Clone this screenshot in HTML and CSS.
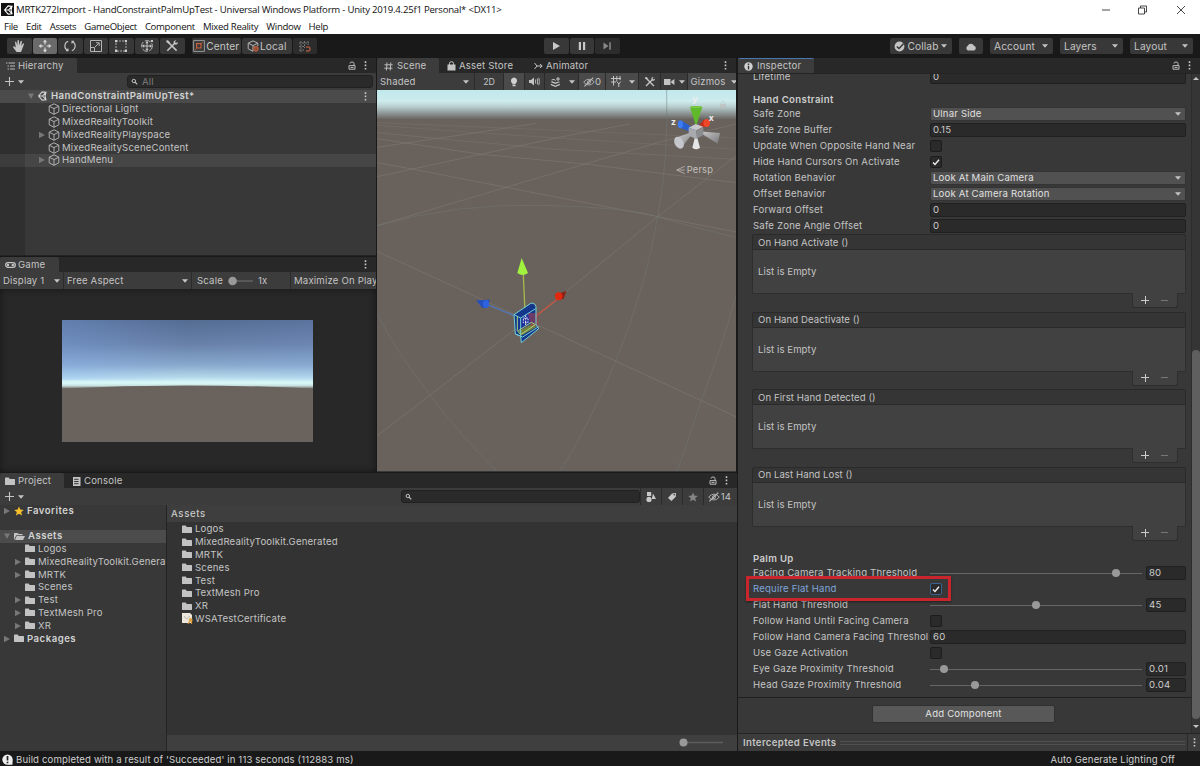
FILE: index.html
```
<!DOCTYPE html>
<html lang="en">
<head>
    <meta charset="UTF-8">
    <meta name="viewport" content="width=device-width, initial-scale=1.0">
    <title>MRTK272Import - HandConstraintPalmUpTest</title>
    <link rel="stylesheet" href="styles.css">
</head>
<body>

    <!-- Shared icons -->
    <svg class="sprite">
        <symbol id="i-cube" viewBox="0 0 12 12"><path d="M6 .8 10.8 3.2V8.8L6 11.3 1.2 8.8V3.2ZM1.2 3.2 6 5.6 10.8 3.2M6 5.6V11.3" fill="none" stroke="#b4b4b4" stroke-width=".95" stroke-linejoin="round"/></symbol>
        <symbol id="i-folder" viewBox="0 0 10 9"><path d="M0 1.2Q0 .6.6.6H3.6L4.8 2H9.4Q10 2 10 2.6V7.4Q10 8 9.4 8H.6Q0 8 0 7.4Z" fill="#c2c2c2"/></symbol>
        <symbol id="i-right" viewBox="0 0 6 8"><path d="M0 .8 6 4 0 7.2Z" fill="#777"/></symbol>
        <symbol id="i-open" viewBox="0 0 6 8"><path d="M0 1.5H6L3 7Z" fill="#777"/></symbol>
        <symbol id="i-drop" viewBox="0 0 6 4"><path d="M0 .3H6L3 3.7Z" fill="#c4c4c4"/></symbol>
        <symbol id="i-lock" viewBox="0 0 8 9"><path d="M1 4.6H7V8.2H1ZM2 2.6V2.4Q2 1 4 1T6 2.4V4.6" fill="none" stroke="#bdbdbd" stroke-width="1"/><path d="M2.5 6.4H5.5" stroke="#bdbdbd"/></symbol>
        <symbol id="i-more" viewBox="0 0 3 9"><path d="M.7.3H2.3V1.9H.7ZM.7 3.6H2.3V5.2H.7ZM.7 6.9H2.3V8.5H.7Z" fill="#c8c8c8"/></symbol>
        <symbol id="i-plus" viewBox="0 0 9 9"><path d="M4.5 0V9M0 4.5H9" stroke="#c4c4c4" stroke-width="1.1"/></symbol>
        <symbol id="i-search" viewBox="0 0 8 8"><circle cx="2.8" cy="3" r="1.7" fill="none" stroke="#c4c4c4"/><path d="M4.1 4.2 6.2 6.4" stroke="#c4c4c4" stroke-width="1.2"/></symbol>
        <symbol id="i-check" viewBox="0 0 10 10"><path d="M2 5.4 4 7.5 8 2.7" fill="none" stroke="#eee" stroke-width="1.4"/></symbol>
        <symbol id="i-unity" viewBox="0 0 10 10"><path d="M9 1.2 5.2.9 1.6 5 5.2 9.1 9 8.8 8 5ZM1.6 5H5.6M5.6 5 8.6 1.5M5.6 5 8.6 8.5" fill="none" stroke="currentColor" stroke-width="1.1"/></symbol>
        <symbol id="i-eye" viewBox="0 0 11 9"><path d="M.6 4.6Q5.5-.8 10.4 4.6 5.5 10 .6 4.6Z" fill="none" stroke="#aaa" stroke-width=".9"/><circle cx="5.5" cy="4.6" r="1.4" fill="none" stroke="#aaa" stroke-width=".9"/><path d="M1.3 8.5 9.4.5" stroke="#bbb" stroke-width="1.1"/></symbol>
        <symbol id="i-star" viewBox="0 0 10 10"><path d="M5 .4 6.3 3.6 9.8 3.9 7.2 6.1 8 9.6 5 7.7 2 9.6 2.8 6.1.2 3.9 3.7 3.6Z" fill="currentColor"/></symbol>
        <symbol id="i-tools" viewBox="0 0 14 14"><path d="M4 4 11.6 11.6M2.3 11.7 10 4" stroke="#c4c4c4" stroke-width="1.6"/><path d="M1.2 1.5 3 1.2 5.2 3.6 3.8 5 1.3 3Z" fill="#c4c4c4"/><path d="M11.2 1.3 9.9 2.9 11.1 4.1 12.8 2.9Q13.1 5.6 10.4 5.7L8.4 3.8Q8.5 1 11.2 1.3Z" fill="#c4c4c4"/></symbol>
    </svg>

    <header class="titlebar">
        <div class="title-row">
            <span class="logo"><svg width="10" height="10"><use href="#i-unity"/></svg></span>
            <span class="title-text">MRTK272Import - HandConstraintPalmUpTest - Universal Windows Platform - Unity 2019.4.25f1 Personal* &lt;DX11&gt;</span>
            <svg class="win-buttons" width="88" height="12" viewBox="0 0 88 12"><path d="M1 6H9M37.5 4H43.5V10H37.5ZM39.5 4V2H45.5V8H43.5M76 2 84 10M84 2 76 10" fill="none" stroke="#333" stroke-width=".9"/></svg>
        </div>
        <nav class="menu">
            <span>File</span><span>Edit</span><span>Assets</span><span>GameObject</span><span>Component</span><span>Mixed Reality</span><span>Window</span><span>Help</span>
        </nav>
    </header>

    <div class="toolbar">
        <div class="group tools">
            <span class="tb"><svg width="14" height="14" viewBox="0 0 14 14"><path d="M4.6 13 1.2 8.4Q1 7 2.2 7.2L3.8 8.6 3 3Q3.6 2 4.3 3L5.3 6.4 5.5 1.6Q6.3.6 7 1.6L7.2 6.3 8.6 2.2Q9.5 1.4 10 2.5L9.2 7 11 4.4Q12.1 4.1 12 5.2L10.2 10 9 13Z" fill="#c4c4c4"/></svg></span>
            <span class="tb on"><svg width="14" height="14" viewBox="0 0 14 14"><path d="M7 3V5.5M7 8.5V11M3 7H5.5M8.5 7H11" stroke="#ddd" stroke-width="1.1"/><path d="M7 .6 9 3.3H5ZM7 13.4 9 10.7H5ZM.6 7 3.3 5V9ZM13.4 7 10.7 5V9Z" fill="#ddd"/></svg></span>
            <span class="tb"><svg width="14" height="14" viewBox="0 0 14 14"><path d="M4.6 11.5A5 5 0 0 1 5.2 2.3M9.4 2.5A5 5 0 0 1 8.8 11.7M3 11.8H5V9.6M11 2.2H9V4.4" fill="none" stroke="#c4c4c4" stroke-width="1.1"/></svg></span>
            <span class="tb"><svg width="14" height="14" viewBox="0 0 14 14"><path d="M1.5 1.5H12.5V12.5H1.5ZM1.5 8.5H5.5V12.5M6 8 10 4M7 3.8H10.2V7" fill="none" stroke="#b4b4b4"/></svg></span>
            <span class="tb"><svg width="14" height="14" viewBox="0 0 14 14"><path d="M2 2H12V12H2Z" fill="none" stroke="#aaa" stroke-dasharray="2 1"/><path d="M1 1H3.2V3.2H1ZM10.8 1H13V3.2H10.8ZM1 10.8H3.2V13H1ZM10.8 10.8H13V13H10.8Z" fill="#ccc"/></svg></span>
            <span class="tb"><svg width="14" height="14" viewBox="0 0 14 14"><circle cx="7" cy="7" r="5.4" fill="none" stroke="#b4b4b4" stroke-dasharray="6 1.5"/><path d="M7 3V11M3 7H11" stroke="#c4c4c4"/><path d="M7 1.8 8.7 4.2H5.3ZM7 12.2 8.7 9.8H5.3ZM1.8 7 4.2 5.3V8.7ZM12.2 7 9.8 5.3V8.7ZM10.8 1H13V3H10.8Z" fill="#c4c4c4"/></svg></span>
            <span class="tb"><svg width="14" height="14"><use href="#i-tools"/></svg></span>
        </div>
        <div class="group pivot">
            <span class="tb wide"><svg width="12" height="12" viewBox="0 0 12 12"><path d="M.6.6H11.4V11.4H.6Z" fill="none" stroke="#999"/><path d="M3.6 3.6H8V8H3.6Z" fill="none" stroke="#c6603d" stroke-width="1.2"/><path d="M8 4 9.7 2.3M3.5 8.5 2.2 9.8" stroke="#c6603d"/></svg>Center</span>
            <span class="tb wide"><svg width="12" height="12" viewBox="0 0 12 12"><path d="M6 .8 10.8 3.2V6M6 11.3 1.2 8.8V3.2L6 .8M1.2 3.2 6 5.6 10.8 3.2M6 5.6V11.3" fill="none" stroke="#b4b4b4"/><circle cx="8.8" cy="8.8" r="2.2" fill="#3a3a3a" stroke="#c6603d" stroke-width="1.2"/><path d="M8.8 6.2V11.4M6.2 8.8H11.4" stroke="#c6603d" stroke-width=".7"/></svg>Local</span>
            <span class="tb dim"><svg width="13" height="13" viewBox="0 0 13 13"><path d="M1 3H11M1 6.5H7M1 10H6M3 1V12M6.5 1V8M10 1V5" fill="none" stroke="#777" stroke-dasharray="2 1"/><path d="M8 7H10Q12 7 12 9T10 11H8" fill="none" stroke="#a2553c" stroke-width="1.4"/></svg></span>
        </div>
        <div class="group play">
            <span class="tb"><svg width="10" height="10" viewBox="0 0 10 10"><path d="M2 1 9 5 2 9Z" fill="#c8c8c8"/></svg></span>
            <span class="tb"><svg width="10" height="10" viewBox="0 0 10 10"><path d="M1.8 1H4V9H1.8ZM6 1H8.2V9H6Z" fill="#c8c8c8"/></svg></span>
            <span class="tb dim"><svg width="10" height="10" viewBox="0 0 10 10"><path d="M1.5 1.5 6.5 5 1.5 8.5ZM7.3 1.2H8.8V8.8H7.3Z" fill="#888"/></svg></span>
        </div>
        <div class="services">
            <span class="tb collab"><svg width="11" height="11" viewBox="0 0 11 11"><circle cx="5.5" cy="5.5" r="4.9" fill="#c4c4c4"/><path d="M2.8 5.5 5 7.5 9.5 2.8" fill="none" stroke="#333" stroke-width="1.4"/></svg>Collab<svg width="6" height="4"><use href="#i-drop"/></svg></span>
            <span class="tb"><svg width="12" height="9" viewBox="0 0 12 9"><path d="M3 8.4A2.5 2.5 0 0 1 2.8 3.8 3.3 3.3 0 0 1 9 3.8 2.4 2.4 0 0 1 9.2 8.4Z" fill="#c4c4c4"/></svg></span>
            <span class="tb menu-btn">Account<svg width="6" height="4"><use href="#i-drop"/></svg></span>
            <span class="tb menu-btn">Layers<svg width="6" height="4"><use href="#i-drop"/></svg></span>
            <span class="tb menu-btn">Layout<svg width="6" height="4"><use href="#i-drop"/></svg></span>
        </div>
    </div>

    <main class="workspace">
        <div class="left">
            <div class="upper">
                <div class="left-col">
                    <section class="panel hierarchy">
                        <div class="tabs">
                            <span class="tab active hier-tab"><svg width="9" height="8" viewBox="0 0 9 8"><path d="M0 1H1.5M2.5 1H9M1.5 4H3M4 4H9M1.5 7H3M4 7H9" stroke="#bbb"/></svg>Hierarchy</span>
                            <span class="tab-tools"><svg width="8" height="9"><use href="#i-lock"/></svg><svg width="3" height="9"><use href="#i-more"/></svg></span>
                        </div>
                        <div class="subbar">
                            <svg class="add" width="9" height="9"><use href="#i-plus"/></svg><svg width="6" height="4"><use href="#i-drop"/></svg>
                            <span class="search hier-search"><svg width="8" height="8"><use href="#i-search"/></svg>All</span>
                        </div>
                        <div class="tree hier-tree">
                            <div class="row scene-row"><svg class="arrow" width="6" height="8"><use href="#i-open"/></svg><svg width="10" height="10"><use href="#i-unity"/></svg><b>HandConstraintPalmUpTest*</b><svg class="row-more" width="3" height="9"><use href="#i-more"/></svg></div>
                            <div class="row child"><i class="arrow"></i><svg width="12" height="12"><use href="#i-cube"/></svg>Directional Light</div>
                            <div class="row child"><i class="arrow"></i><svg width="12" height="12"><use href="#i-cube"/></svg>MixedRealityToolkit</div>
                            <div class="row child"><svg class="arrow" width="6" height="8"><use href="#i-right"/></svg><svg width="12" height="12"><use href="#i-cube"/></svg>MixedRealityPlayspace</div>
                            <div class="row child"><i class="arrow"></i><svg width="12" height="12"><use href="#i-cube"/></svg>MixedRealitySceneContent</div>
                            <div class="row child picked"><svg class="arrow" width="6" height="8"><use href="#i-right"/></svg><svg width="12" height="12"><use href="#i-cube"/></svg>HandMenu</div>
                        </div>
                    </section>

                    <section class="panel game">
                        <div class="tabs">
                            <span class="tab active game-tab"><svg width="11" height="6" viewBox="0 0 11 6"><rect x=".7" y=".7" width="9.6" height="4.6" rx="2.3" fill="none" stroke="#c4c4c4" stroke-width="1.3"/><circle cx="3" cy="3" r="1.2" fill="#c4c4c4"/><circle cx="7.8" cy="3" r="1.2" fill="#c4c4c4"/></svg>Game</span>
                            <span class="tab-tools"><svg width="3" height="9"><use href="#i-more"/></svg></span>
                        </div>
                        <div class="subbar game-bar">
                            <span class="display">Display 1<svg width="6" height="4"><use href="#i-drop"/></svg></span>
                            <span class="aspect">Free Aspect<svg width="6" height="4"><use href="#i-drop"/></svg></span>
                            <span class="scale">Scale<svg width="25" height="10" viewBox="0 0 25 10"><path d="M4 5H25" stroke="#626262" stroke-width="1.5"/><circle cx="4.6" cy="5" r="4.3" fill="#999"/></svg>1x</span>
                            <span class="maximize">Maximize On Play</span>
                        </div>
                        <div class="game-view">
                            <svg width="251" height="122" viewBox="0 0 251 122">
                                <defs>
                                    <linearGradient id="sky" x1="0" y1="0" x2="0" y2="1">
                                        <stop offset="0" stop-color="#546c92"/><stop offset=".35" stop-color="#6881a9"/><stop offset=".65" stop-color="#88a8cc"/><stop offset=".82" stop-color="#b2d6e8"/><stop offset=".91" stop-color="#dafaf9"/><stop offset=".95" stop-color="#c8e2e1"/><stop offset="1" stop-color="#68645f"/>
                                    </linearGradient>
                                    <linearGradient id="side" x1="0" y1="0" x2="1" y2="0">
                                        <stop offset="0" stop-color="#87b4ff" stop-opacity=".25"/><stop offset=".5" stop-color="#87b4ff" stop-opacity="0"/><stop offset="1" stop-color="#87b4ff" stop-opacity=".1"/>
                                    </linearGradient>
                                </defs>
                                <rect width="251" height="69" fill="url(#sky)"/>
                                <rect width="251" height="60" fill="url(#side)"/>
                                <path d="M0 68.5Q125 62.5 251 68.5V122H0Z" fill="#69625d"/>
                            </svg>
                        </div>
                    </section>
                </div>

                <section class="panel scene">
                    <div class="tabs">
                        <span class="tab active scene-tab"><svg width="9" height="9" viewBox="0 0 9 9"><path d="M3 .5 2.4 8.5M6.8.5 6.2 8.5M.5 2.8H8.7M.3 6.2H8.5" stroke="#bbb"/></svg>Scene</span>
                        <span class="tab store-tab"><svg width="9" height="10" viewBox="0 0 9 10"><path d="M.5 3.5H8.5V9.5H.5Z" fill="#c4c4c4"/><path d="M2.5 4V2.3Q2.5.7 4.5.7T6.5 2.3V4" fill="none" stroke="#c4c4c4"/></svg>Asset Store</span>
                        <span class="tab anim-tab"><svg width="9" height="8" viewBox="0 0 9 8"><path d="M.5 1 3 4 .5 7M3 4H8M6 2 8.2 4 6 6" fill="none" stroke="#c4c4c4"/></svg>Animator</span>
                        <span class="tab-tools"><svg width="3" height="9"><use href="#i-more"/></svg></span>
                    </div>
                    <div class="subbar scene-bar">
                        <span class="shaded">Shaded<svg width="6" height="4"><use href="#i-drop"/></svg></span>
                        <span class="cell two-d">2D</span>
                        <span class="cell lit c-light"><svg width="8" height="10" viewBox="0 0 8 10"><path d="M4 .5A3.2 3.2 0 0 1 5.6 6.4V7.2H2.4V6.4A3.2 3.2 0 0 1 4 .5ZM2.5 7.8H5.5V9.3H2.5Z" fill="#d0d0d0"/></svg></span>
                        <span class="cell c-audio"><svg width="11" height="9" viewBox="0 0 11 9"><path d="M0 3H2L5 .6V8.4L2 6H0Z" fill="#c4c4c4"/><path d="M6.6 2.5V6.5M8.3 1.6Q9 4.5 8.3 7.4M9.8.8Q11 4.5 9.8 8.2" fill="none" stroke="#c4c4c4" stroke-width=".9"/></svg></span>
                        <span class="cell c-fx"><svg width="11" height="10" viewBox="0 0 11 10"><path d="M.5 5 5.3 7 10.3 5 8.6 4.4 5.3 5.6 2.2 4.3Z" fill="#c4c4c4"/><path d="M.8 7.4 5.3 9.3 9.8 7.4" fill="none" stroke="#c4c4c4" stroke-width="1.2"/><path d="M1.5 3 4 2.4 5.6 3.6M8 0V4M6 2H10" fill="none" stroke="#c4c4c4"/></svg></span>
                        <span class="cell c-fxdrop"><svg width="6" height="4"><use href="#i-drop"/></svg></span>
                        <span class="cell lit c-eye"><svg width="12" height="10"><use href="#i-eye"/></svg>0</span>
                        <span class="cell lit c-grid"><svg width="11" height="11" viewBox="0 0 11 11"><path d="M0 2.5H10M0 6H5M2.5 0V9.5M5.8 0V5M9 0V4M5.8 5.5 7.8 8 9.8 5.5M7.8 8V11" fill="none" stroke="#c4c4c4"/></svg></span>
                        <span class="cell lit c-griddrop"><svg width="6" height="4"><use href="#i-drop"/></svg></span>
                        <span class="cell c-tools"><svg width="12" height="12"><use href="#i-tools"/></svg></span>
                        <span class="cell c-cam"><svg width="11" height="8" viewBox="0 0 11 8"><path d="M0 1H6.5V7H0ZM7.2 3.2 10.4 1V7L7.2 4.8Z" fill="#c4c4c4"/></svg><svg width="6" height="4"><use href="#i-drop"/></svg></span>
                        <span class="cell lit c-gizmos">Gizmos</span>
                        <span class="cell lit c-last"><svg width="6" height="4"><use href="#i-drop"/></svg></span>
                    </div>
                    <svg class="scene-view" width="359" height="381" viewBox="3 6 1077 1143">
                        <defs>
                            <linearGradient id="horizon" x1="0" y1="0" x2="0" y2="1">
                                <stop offset="0" stop-color="#c0e9ee"/><stop offset=".38" stop-color="#cdebec"/><stop offset=".55" stop-color="#b9cfd0"/><stop offset=".75" stop-color="#929d9c"/><stop offset="1" stop-color="#655e59"/>
                            </linearGradient>
                            <linearGradient id="grey-cone" x1="0" y1="0" x2="1" y2="1"><stop offset="0" stop-color="#d0d0d2"/><stop offset="1" stop-color="#77777a"/></linearGradient>
                        </defs>
                        <rect x="3" y="6" width="1077" height="1143" fill="#69615b"/>
                        <rect x="3" y="6" width="1077" height="90" fill="url(#horizon)"/>
                        <!-- ground grid -->
                        <g fill="none" stroke="#8a837e" stroke-width="2" opacity=".65">
                            <path d="M3 490 487 712 1080 986M3 1044 420 722M487 680 845 386 1080 204"/>
                            <path d="M3 224 118 245 390 298 845 386 1080 432"/>
                            <path d="M3 413 390 298 627 228 860 160 1080 108"/>
                            <path d="M3 266 314 199 540 150 760 108M3 178 300 134 480 106M3 152 315 199 627 228 1080 284"/>
                            <path d="M3 134 210 154 540 184 1080 214" opacity=".8"/>
                            <path d="M3 112 300 134 700 160 1080 184M3 104 480 124 1080 150" opacity=".6"/>
                        </g>
                        <g fill="none" stroke="#72797a" stroke-width="2" opacity=".75">
                            <path d="M3 413Q240 345 500 352T845 386 1080 448M872 6Q878 210 845 386 810 600 718 822 640 1010 553 1149M3 676Q60 790 160 918 260 1050 362 1149M1080 622Q1040 770 976 938 940 1050 903 1149"/>
                        </g>
                        <!-- move gizmo -->
                        <path d="M442 560 448 695" stroke="#a5b84c" stroke-width="4"/>
                        <path d="M437 510 456 555Q440 567 424 555Z" fill="#a0f23e"/>
                        <path d="M334 650 450 697" stroke="#5279bd" stroke-width="4"/>
                        <path d="M301 637 342 635 332 660 318 659Z" fill="#2450bd"/><ellipse cx="330" cy="648" rx="9" ry="12" fill="#2e63df"/>
                        <path d="M544 634 460 700" stroke="#c95843" stroke-width="4"/>
                        <path d="M571 609 536 620 544 637 563 632Z" fill="#8c2217"/><ellipse cx="548" cy="625" rx="11" ry="12" fill="#e2280f"/>
                        <path d="M414 680 468 646 479 654V708L488 722 436 764 434 744 418 738Z" fill="#14368c"/>
                        <path d="M430 692 464 670V718L430 738Z" fill="#1c2f9c"/>
                        <path d="M427 730 470 706 482 716 438 742Z" fill="#72813f"/>
                        <path d="M455 675H487V713L466 716Z" fill="#a43f52" opacity=".6"/>
                        <path d="M414 680 464 646Q477 643 480 656V710L488 722 436 764 434 744 418 738ZM414 680 434 690 479 662M434 690V744M418 738 440 747 488 716" fill="none" stroke="#72d0d2" stroke-width="3" stroke-linejoin="round"/>
                        <path d="M424 684V728L434 740 478 710 466 703 427 728" fill="none" stroke="#a5d579" stroke-width="3"/>
                        <path d="M442 690H456V704H442ZM449 682V711" fill="none" stroke="#eee" stroke-width="3" stroke-dasharray="5 3"/>
                        <!-- orientation gizmo -->
                        <path d="M960 125 917 98 907 118 940 130Z" fill="#2860cf"/><ellipse cx="913" cy="109" rx="8" ry="12" fill="#3d7cf0"/>
                        <path d="M960 125 983 95 1000 108 975 122Z" fill="#bd2d17"/><ellipse cx="992" cy="105" rx="10" ry="12" fill="#ef4528"/>
                        <path d="M955 130 903 148 915 181Z" fill="url(#grey-cone)"/><ellipse cx="909" cy="164" rx="13" ry="19" transform="rotate(-28 909 164)" fill="#c6c7cc"/>
                        <path d="M965 130 1032 135 1025 167Z" fill="url(#grey-cone)"/>
                        <path d="M960 135 972 179Q960 189 949 179Z" fill="#e6e6e6"/>
                        <path d="M960 115 942 57Q960 51 979 57Z" fill="#60b92b"/><path d="M941 57Q960 51 980 57 960 65 941 57Z" fill="#7bc944"/>
                        <path d="M938 119 959 108 982 116 961 127Z" fill="#c8c9cc"/><path d="M938 119 961 127V153L938 143Z" fill="#a9aaae"/><path d="M961 127 982 116V141L961 153Z" fill="#8c8d91"/>
                        <g class="axis-text"><text x="949" y="43">y</text><text x="885" y="110">z</text><text x="998" y="99">x</text></g>
                        <path d="M926 235 902 246 926 257M904 246H926" fill="none" stroke="#bdbab7" stroke-width="2.5"/>
                        <text class="persp" x="932" y="256">Persp</text>
                        <g opacity=".5"><path d="M1032 48H1050V61H1032Z" fill="#bfb8b4"/><path d="M1036 48V43Q1041 36 1046 43V48" fill="none" stroke="#aaa" stroke-width="2"/></g>
                    </svg>
                </section>
            </div>

            <section class="panel project">
                <div class="tabs">
                    <span class="tab active project-tab"><svg width="10" height="9"><use href="#i-folder"/></svg>Project</span>
                    <span class="tab console-tab"><svg width="9" height="9" viewBox="0 0 9 9"><path d="M1 0H8.5V9H1Z" fill="#c4c4c4"/><path d="M2.2 2.3H6.5M2.2 4.5H6.5M2.2 6.7H6.5" stroke="#333"/></svg>Console</span>
                    <span class="tab-tools"><svg width="8" height="9"><use href="#i-lock"/></svg><svg width="3" height="9"><use href="#i-more"/></svg></span>
                </div>
                <div class="subbar project-bar">
                    <svg class="add" width="9" height="9"><use href="#i-plus"/></svg><svg width="6" height="4"><use href="#i-drop"/></svg>
                    <span class="search project-search"><svg width="8" height="8"><use href="#i-search"/></svg></span>
                    <span class="pcell"><svg width="10" height="10" viewBox="0 0 10 10"><path d="M1 0H5.2V4H1Z" fill="#c8c8c8"/><circle cx="3" cy="7.4" r="2.6" fill="#c8c8c8"/><path d="M7 1.5 10 7H5.8Z" fill="#c8c8c8"/></svg></span>
                    <span class="pcell"><svg width="10" height="10" viewBox="0 0 10 10"><path d="M1 6 5 1.4 9 1 8.8 4.8 4.5 9Z" fill="#c8c8c8"/><circle cx="7.2" cy="2.8" r=".8" fill="#3c3c3c"/></svg></span>
                    <span class="pcell faded"><svg width="10" height="10"><use href="#i-star"/></svg></span>
                    <span class="pcell count"><svg width="12" height="10"><use href="#i-eye"/></svg>14</span>
                </div>
                <div class="project-body">
                    <div class="tree folders">
                        <div class="row root"><svg class="arrow" width="6" height="8"><use href="#i-right"/></svg><svg class="gold" width="10" height="10"><use href="#i-star"/></svg><b>Favorites</b></div>
                        <div class="row spacer"></div>
                        <div class="row root selected"><svg class="arrow" width="6" height="8"><use href="#i-open"/></svg><svg width="11" height="9" viewBox="0 0 11 9"><path d="M0 8V1H3.5L4.7 2H8.5V3.2H2.2L.6 7Z" fill="#c2c2c2"/><path d="M2.7 3.9H11L9 8.1H1Z" fill="#c2c2c2"/></svg><b>Assets</b></div>
                        <div class="row"><i class="arrow"></i><svg width="10" height="9"><use href="#i-folder"/></svg>Logos</div>
                        <div class="row"><svg class="arrow" width="6" height="8"><use href="#i-right"/></svg><svg width="10" height="9"><use href="#i-folder"/></svg>MixedRealityToolkit.Generated</div>
                        <div class="row"><svg class="arrow" width="6" height="8"><use href="#i-right"/></svg><svg width="10" height="9"><use href="#i-folder"/></svg>MRTK</div>
                        <div class="row"><i class="arrow"></i><svg width="10" height="9"><use href="#i-folder"/></svg>Scenes</div>
                        <div class="row"><svg class="arrow" width="6" height="8"><use href="#i-right"/></svg><svg width="10" height="9"><use href="#i-folder"/></svg>Test</div>
                        <div class="row"><svg class="arrow" width="6" height="8"><use href="#i-right"/></svg><svg width="10" height="9"><use href="#i-folder"/></svg>TextMesh Pro</div>
                        <div class="row"><svg class="arrow" width="6" height="8"><use href="#i-right"/></svg><svg width="10" height="9"><use href="#i-folder"/></svg>XR</div>
                        <div class="row root"><svg class="arrow" width="6" height="8"><use href="#i-right"/></svg><svg width="10" height="9"><use href="#i-folder"/></svg><b>Packages</b></div>
                    </div>
                    <div class="files">
                        <div class="crumb">Assets</div>
                        <div class="tree file-list">
                            <div class="row"><svg width="10" height="9"><use href="#i-folder"/></svg>Logos</div>
                            <div class="row"><svg width="10" height="9"><use href="#i-folder"/></svg>MixedRealityToolkit.Generated</div>
                            <div class="row"><svg width="10" height="9"><use href="#i-folder"/></svg>MRTK</div>
                            <div class="row"><svg width="10" height="9"><use href="#i-folder"/></svg>Scenes</div>
                            <div class="row"><svg width="10" height="9"><use href="#i-folder"/></svg>Test</div>
                            <div class="row"><svg width="10" height="9"><use href="#i-folder"/></svg>TextMesh Pro</div>
                            <div class="row"><svg width="10" height="9"><use href="#i-folder"/></svg>XR</div>
                            <div class="row cert"><svg width="11" height="11" viewBox="0 0 11 11"><path d="M0 0H8L10 2V10H0Z" fill="#eee8dc"/><path d="M2 3 4.5 6 8 3" fill="none" stroke="#aaa" stroke-width=".8"/><circle cx="8.6" cy="7" r="2" fill="#e0a445"/><path d="M7.5 8.5 6 11M9.5 8.5V11" stroke="#cf8e3a" stroke-width="1.2"/></svg>WSATestCertificate</div>
                        </div>
                        <div class="zoom-bar"><svg width="44" height="9" viewBox="0 0 44 9"><path d="M4 4.5H44" stroke="#5e5e5e" stroke-width="1.3"/><circle cx="4.5" cy="4.5" r="4" fill="#999"/></svg></div>
                    </div>
                </div>
            </section>
        </div>

        <section class="panel inspector">
            <div class="tabs">
                <span class="tab active insp-tab"><svg width="9" height="9" viewBox="0 0 9 9"><circle cx="4.5" cy="4.5" r="4.2" fill="#d0d0d0"/><path d="M4.5 1.4V3M4.5 3.8V7.4" stroke="#333" stroke-width="1.4"/></svg>Inspector</span>
                <span class="tab-tools"><svg width="8" height="9"><use href="#i-lock"/></svg><svg width="3" height="9"><use href="#i-more"/></svg></span>
            </div>
            <div class="insp-body">
                <div class="insp-scroll">
                    <div class="props">
                        <div class="prop first"><label>Lifetime</label><span class="field">0</span></div>
                        <h3 class="constraint-head">Hand Constraint</h3>
                        <div class="prop"><label>Safe Zone</label><span class="select">Ulnar Side<svg width="6" height="4"><use href="#i-drop"/></svg></span></div>
                        <div class="prop"><label>Safe Zone Buffer</label><span class="field">0.15</span></div>
                        <div class="prop"><label>Update When Opposite Hand Near</label><span class="check"></span></div>
                        <div class="prop"><label>Hide Hand Cursors On Activate</label><span class="check"><svg width="10" height="10"><use href="#i-check"/></svg></span></div>
                        <div class="prop"><label>Rotation Behavior</label><span class="select">Look At Main Camera<svg width="6" height="4"><use href="#i-drop"/></svg></span></div>
                        <div class="prop"><label>Offset Behavior</label><span class="select">Look At Camera Rotation<svg width="6" height="4"><use href="#i-drop"/></svg></span></div>
                        <div class="prop"><label>Forward Offset</label><span class="field">0</span></div>
                        <div class="prop"><label>Safe Zone Angle Offset</label><span class="field">0</span></div>

                        <div class="event"><div class="event-head">On Hand Activate ()</div><div class="event-list">List is Empty</div><div class="event-foot"><i class="plus"></i><i class="minus"></i></div></div>
                        <div class="event"><div class="event-head">On Hand Deactivate ()</div><div class="event-list">List is Empty</div><div class="event-foot"><i class="plus"></i><i class="minus"></i></div></div>
                        <div class="event"><div class="event-head">On First Hand Detected ()</div><div class="event-list">List is Empty</div><div class="event-foot"><i class="plus"></i><i class="minus"></i></div></div>
                        <div class="event"><div class="event-head">On Last Hand Lost ()</div><div class="event-list">List is Empty</div><div class="event-foot"><i class="plus"></i><i class="minus"></i></div></div>

                        <h3 class="palm-head">Palm Up</h3>
                        <div class="prop"><label>Facing Camera Tracking Threshold</label><span class="slider"><i class="knob" style="left: 87.5%"></i></span><span class="field num">80</span></div>
                        <div class="prop flat"><label>Require Flat Hand</label><span class="check focus"><svg width="10" height="10"><use href="#i-check"/></svg></span><span class="callout"></span></div>
                        <div class="prop"><label>Flat Hand Threshold</label><span class="slider"><i class="knob" style="left: 50%"></i></span><span class="field num">45</span></div>
                        <div class="prop"><label>Follow Hand Until Facing Camera</label><span class="check"></span></div>
                        <div class="prop"><label>Follow Hand Camera Facing Threshol</label><span class="field">60</span></div>
                        <div class="prop"><label>Use Gaze Activation</label><span class="check"></span></div>
                        <div class="prop"><label>Eye Gaze Proximity Threshold</label><span class="slider"><i class="knob" style="left: 6.5%"></i></span><span class="field num">0.01</span></div>
                        <div class="prop"><label>Head Gaze Proximity Threshold</label><span class="slider"><i class="knob" style="left: 21.2%"></i></span><span class="field num">0.04</span></div>
                    </div>
                    <div class="add-area"><button class="add-component" type="button">Add Component</button></div>
                </div>
                <div class="scrollbar"><i class="up"></i><i class="thumb"></i><i class="down"></i></div>
            </div>
            <div class="events-bar"><b>Intercepted Events</b><span class="grip"></span><span class="events-more"><svg width="3" height="9"><use href="#i-more"/></svg></span></div>
        </section>
    </main>

    <footer class="status">
        <svg width="12" height="12" viewBox="0 0 12 12"><circle cx="5.5" cy="5.6" r="5.2" fill="#eee"/><path d="M6 10.8H10.5V6Z" fill="#eee"/><path d="M5.5 2V6.6M5.5 7.7V9.3" stroke="#222" stroke-width="1.7"/></svg>
        <span class="status-msg">Build completed with a result of 'Succeeded' in 113 seconds (112883 ms)</span>
        <span class="lighting">Auto Generate Lighting Off</span>
    </footer>

</body>
</html>
```
FILE: styles.css
```
* {
    box-sizing: border-box;
}

body {
    margin: 0;
    width: 1200px;
    height: 766px;
    display: flex;
    flex-direction: column;
    overflow: hidden;
    background: #191919;
    color: #c4c4c4;
    font-family: Inter, "Liberation Sans", sans-serif;
    font-size: 9.6px;
    letter-spacing: 0.18px;
    line-height: 12px;
    white-space: nowrap;
}

svg {
    display: block;
    flex: none;
}

i {
    display: block;
}

.sprite {
    position: absolute;
    width: 0;
    height: 0;
}

/* Title bar and menu */
.titlebar {
    height: 34px;
    background: #fff;
    color: #111;
    font-family: "Open Sans", "Noto Sans", sans-serif;
    font-size: 9.6px;
    letter-spacing: -0.23px;
}

.title-row {
    display: flex;
    align-items: center;
    height: 19px;
    padding-left: 1px;
}

.logo {
    width: 13px;
    height: 13px;
    margin-right: 2px;
    padding: 1.5px;
    background: #111;
    color: #fff;
}

.win-buttons {
    margin-left: auto;
    margin-right: 11px;
}

.menu {
    display: flex;
    gap: 8px;
    padding: 2px 0 0 4px;
    letter-spacing: -0.32px;
}

/* Main toolbar */
.toolbar {
    display: flex;
    align-items: center;
    height: 24px;
    padding-left: 7px;
    background: #191919;
    font-size: 10.2px;
    letter-spacing: 0.12px;
}

.group {
    display: flex;
    gap: 1px;
}

.pivot {
    margin-left: 7px;
}

.play {
    margin-left: 227px;
}

.services {
    display: flex;
    gap: 7px;
    margin-left: auto;
    margin-right: 7px;
}

.tb {
    display: flex;
    align-items: center;
    justify-content: center;
    width: 24.5px;
    height: 16px;
    border-radius: 2px;
    background: #383838;
}

.tb.on {
    background: #6a6a6a;
}

.tb.dim {
    background: #2c2c2c;
}

.tb.wide {
    width: 49.5px;
    gap: 1px;
}

.tb.collab {
    width: 62px;
    gap: 2px;
}

.tb.menu-btn {
    width: 63px;
    justify-content: space-between;
    padding: 0 5px 0 4px;
}

/* Panels */
.workspace {
    display: flex;
    gap: 1px;
    height: 693px;
}

.left {
    display: flex;
    flex-direction: column;
    gap: 1px;
    width: 737px;
}

.upper {
    display: flex;
    gap: 1px;
    height: 414px;
}

.left-col {
    display: flex;
    flex-direction: column;
    gap: 1px;
    width: 376px;
}

.panel {
    display: flex;
    flex-direction: column;
    background: #383838;
    overflow: hidden;
}

.tabs {
    display: flex;
    flex: none;
    height: 15px;
    padding-right: 9px;
    background: #282828;
}

.tab {
    display: flex;
    align-items: center;
    gap: 4px;
    padding-left: 6px;
    padding-top: 1px;
}

.tab.active {
    background: #3c3c3c;
    border-radius: 2px 2px 0 0;
}

.tab-tools {
    display: flex;
    align-items: center;
    gap: 8px;
    margin-left: auto;
}

.subbar {
    display: flex;
    align-items: center;
    flex: none;
    height: 17px;
    background: #3c3c3c;
}

.add {
    margin: 0 4px 0 5px;
}

.search {
    display: flex;
    align-items: center;
    gap: 3px;
    height: 13px;
    padding-left: 3px;
    border: 1px solid #202020;
    border-radius: 3px;
    background: #2a2a2a;
    color: #7c7c7c;
}

/* Hierarchy */
.hierarchy {
    height: 198px;
    border-bottom: 1px solid #242424;
}

.hier-tab {
    width: 77px;
    gap: 3px;
}

.hier-search {
    width: 246px;
    margin-left: 103px;
}

.tree .row {
    display: flex;
    align-items: center;
    height: 12.8px;
}

.arrow {
    width: 6px;
    flex: none;
}

.hier-tree {
    flex: 1;
    background: linear-gradient(90deg, #2f2f2f 25px, #383838 25px);
}

.hier-tree .scene-row {
    padding-left: 28px;
    background: #4b4b4b;
    color: #d4d4d4;
}

.scene-row .arrow {
    margin-right: 3px;
}

.scene-row b {
    margin-left: 4px;
    letter-spacing: 0.42px;
}

.row-more {
    margin-left: auto;
    margin-right: 9px;
}

.hier-tree .child {
    padding-left: 39px;
}

.child .arrow {
    margin-right: 3px;
}

.child svg + svg,
.child i + svg {
    margin-right: 2px;
}

.hier-tree .picked {
    background: linear-gradient(90deg, #3c3c3c 25px, #464646 25px);
}

b,
h3 {
    font-weight: 600;
    letter-spacing: 0.35px;
}

/* Game */
.game {
    flex: 1;
}

.game-tab {
    width: 59px;
    gap: 2px;
    padding-left: 5px;
}

.game-bar > span {
    display: flex;
    align-items: center;
    height: 17px;
    border-right: 1px solid #2b2b2b;
    overflow: hidden;
}

.game-bar > .display {
    width: 64px;
    justify-content: space-between;
    padding: 0 3px;
}

.game-bar > .aspect {
    width: 128px;
    justify-content: space-between;
    padding: 0 3px;
}

.game-bar > .scale {
    width: 99px;
    gap: 5px;
    padding-left: 5px;
}

.game-bar > .maximize {
    width: 85px;
    padding-left: 3px;
    border-right: 0;
}

.game-view {
    flex: 1;
    padding: 31px 0 0 62px;
    background: #282828;
    box-shadow: inset 0 0 6px #151515;
}

/* Scene */
.scene {
    width: 359px;
}

.scene-tab {
    width: 62px;
    padding-left: 7px;
}

.store-tab {
    width: 86px;
    padding-left: 8px;
    gap: 3px;
}

.anim-tab {
    padding-left: 9px;
    gap: 3px;
}

.scene-bar {
    overflow: hidden;
}

.shaded {
    display: flex;
    align-items: center;
    justify-content: space-between;
    flex: none;
    width: 98px;
    height: 17px;
    padding: 0 5px 0 3px;
    border-right: 1px solid #2b2b2b;
}

.cell {
    display: flex;
    align-items: center;
    justify-content: center;
    flex: none;
    height: 17px;
    border-right: 1px solid #2b2b2b;
}

.cell.lit {
    background: #4a4a4a;
}

.two-d {
    width: 29px;
    font-size: 8.8px;
    letter-spacing: 0;
}

.c-light {
    width: 21px;
}

.c-audio {
    width: 20px;
}

.c-fx {
    width: 20px;
    border-right: 0;
}

.c-fxdrop {
    width: 14px;
}

.c-eye {
    width: 27px;
}

.c-grid {
    width: 20px;
    border-right: 0;
}

.c-griddrop {
    width: 13px;
}

.c-tools {
    width: 22px;
}

.c-cam {
    width: 27px;
    gap: 4px;
}

.c-gizmos {
    width: 40px;
    border-right: 0;
}

.c-last {
    justify-content: flex-start;
    width: 14px;
    padding-left: 3px;
    border-right: 0;
}

.axis-text {
    fill: #eee;
    font-size: 26px;
    font-weight: 700;
    letter-spacing: 0;
}

.persp {
    fill: #c5c2bf;
    font-size: 28px;
    letter-spacing: 0.6px;
}

/* Project */
.project {
    flex: 1;
}

.project-tab {
    width: 64px;
    gap: 3px;
    padding-left: 5px;
}

.console-tab {
    gap: 3px;
    padding-left: 8px;
}

.project-search {
    width: 239px;
    margin-left: 377px;
}

.pcell {
    display: flex;
    align-items: center;
    justify-content: center;
    width: 21px;
    height: 17px;
    border-left: 1px solid #2b2b2b;
}

.pcell.faded {
    color: #858585;
}

.pcell.count {
    width: 32px;
    gap: 1px;
}

.project-body {
    display: flex;
    flex: 1;
}

.folders {
    width: 167px;
    border-right: 1px solid #242424;
    overflow: hidden;
}

.folders .row {
    padding-left: 15px;
}

.folders .spacer {
    height: 12px;
}

.folders .row svg + svg,
.folders .row i + svg {
    margin: 0 3px 0 4px;
}

.folders .root {
    padding-left: 4px;
}

.folders .root.selected {
    background: #4c4c4c;
}

.folders .root b {
    color: #d2d2d2;
    letter-spacing: 0.5px;
}

.gold {
    color: #f5c02c;
}

.files {
    display: flex;
    flex-direction: column;
    flex: 1;
    background: #333;
}

.crumb {
    height: 17px;
    padding: 3px 0 0 4px;
    background: #3e3e3e;
    color: #c8c8c8;
    font-weight: 500;
    letter-spacing: 0.6px;
}

.file-list {
    flex: 1;
    padding-top: 1px;
}

.file-list .row {
    gap: 3px;
    padding-left: 15px;
}

.file-list .cert {
    gap: 2px;
}

.zoom-bar {
    display: flex;
    align-items: center;
    justify-content: flex-end;
    height: 16px;
    padding: 0 14px 1px 0;
    background: #3f3f3f;
}

/* Inspector */
.inspector {
    width: 462px;
}

.insp-tab {
    width: 76px;
    border-top: 1px solid #4a77ad;
    padding-top: 0;
}

.inspector .tabs {
    border-bottom: 1px solid #242424;
    height: 16px;
}

.insp-tab svg {
    margin-top: 1px;
}

.insp-body {
    display: flex;
    flex: 1;
    min-height: 0;
}

.insp-scroll {
    width: 453px;
    overflow: hidden;
}

.props {
    height: 624px;
    padding: 0 5px 0 15px;
    border-bottom: 1px solid #202020;
    overflow: hidden;
}

.prop {
    display: flex;
    align-items: center;
    height: 16px;
}

.prop.first {
    margin-top: -5px;
}

.prop label {
    flex: none;
    width: 177px;
}

.props h3 {
    margin: 0;
    font-size: 9.6px;
    color: #cecece;
}

.constraint-head {
    padding: 9px 0 0;
    height: 21px;
}

.palm-head {
    height: 21px;
    padding: 8.5px 0 0;
}

.field,
.select {
    display: flex;
    align-items: center;
    flex: 1;
    height: 14.4px;
    padding-left: 2px;
    border: 1px solid #202020;
    border-radius: 2px;
    background: #2a2a2a;
    color: #cacaca;
}

.select {
    justify-content: space-between;
    height: 13.6px;
    padding: 0 4px 0 2px;
    border-color: #343434;
    background: #515151;
    color: #e0e0e0;
}

.field.num {
    flex: none;
    width: 40px;
}

.check {
    width: 12px;
    height: 12px;
    border: 1px solid #1c1c1c;
    border-radius: 2px;
    background: #2a2a2a;
}

.check.focus {
    border-color: #3a6190;
}

.slider {
    position: relative;
    flex: none;
    width: 212px;
    height: 1px;
    margin-right: 4px;
    background: #666;
}

.knob {
    position: absolute;
    top: -4px;
    width: 8px;
    height: 8px;
    margin-left: -4px;
    border-radius: 50%;
    background: #999;
}

.flat {
    position: relative;
}

.flat label {
    color: #7fa6da;
}

.callout {
    position: absolute;
    left: -7px;
    top: -5px;
    width: 205px;
    height: 25px;
    border: 3px solid #c9252d;
    box-shadow: 0 1px 2px rgba(0, 0, 0, 0.4);
}

.event {
    height: 77.5px;
    margin-left: -1px;
    letter-spacing: 0.07px;
}

.event-head {
    height: 16px;
    padding: 1.5px 5px 0;
    border: 1px solid #2a2a2a;
    border-radius: 2px 2px 0 0;
    background: #353535;
}

.event-list {
    display: flex;
    align-items: center;
    height: 44px;
    padding: 1px 0 0 5px;
    border: 1px solid #2e2e2e;
    border-top: 0;
    border-radius: 0 0 2px 2px;
    background: #414141;
}

.event-foot {
    display: flex;
    align-items: center;
    justify-content: space-between;
    width: 46px;
    height: 15px;
    margin-top: -1px;
    margin-left: auto;
    margin-right: 8px;
    padding: 0 9px 0 8px;
    border: 1px solid #2e2e2e;
    border-top: 0;
    border-radius: 0 0 3px 3px;
    background: #414141;
}

.plus {
    width: 8px;
    height: 8px;
    background: linear-gradient(#ccc, #ccc) center / 8px 1px no-repeat, linear-gradient(#ccc, #ccc) center / 1px 8px no-repeat;
}

.minus {
    width: 7px;
    height: 1px;
    background: #777;
}

.add-area {
    padding: 7px 0 0 134px;
}

.add-component {
    display: block;
    width: 183px;
    height: 18px;
    padding: 0;
    border: 1px solid #303030;
    border-radius: 2px;
    background: #585858;
    color: #e2e2e2;
    font: inherit;
    letter-spacing: inherit;
}

.scrollbar {
    display: flex;
    flex-direction: column;
    align-items: center;
    width: 9px;
    padding: 3px 0 5px;
    background: #353535;
    border-left: 1px solid #2c2c2c;
}

.up,
.down {
    border: 3px solid transparent;
}

.up {
    border-top: 0;
    border-bottom: 3px solid #c4c4c4;
}

.down {
    border-bottom: 0;
    border-top: 3px solid #c4c4c4;
    margin-top: 6px;
}

.thumb {
    width: 8px;
    height: 369px;
    margin-top: auto;
    border-radius: 4px;
    background: #5f5f5f;
}

.events-bar {
    display: flex;
    align-items: center;
    height: 18px;
    padding-left: 5px;
    border-top: 1px solid #242424;
    background: #3c3c3c;
}

.grip {
    flex: 1;
    height: 4px;
    margin: 0 2px 0 4px;
    border: 1px solid #505050;
    border-width: 1px 0;
}

.events-more {
    display: flex;
    align-items: center;
    justify-content: center;
    width: 13px;
    height: 17px;
    border-left: 1px solid #2a2a2a;
}

/* Status bar */
.status {
    display: flex;
    align-items: center;
    height: 15px;
    padding: 2px 25px 0 2px;
    gap: 2px;
    color: #cfcfcf;
    letter-spacing: 0.13px;
}

.lighting {
    margin-left: auto;
}
```
